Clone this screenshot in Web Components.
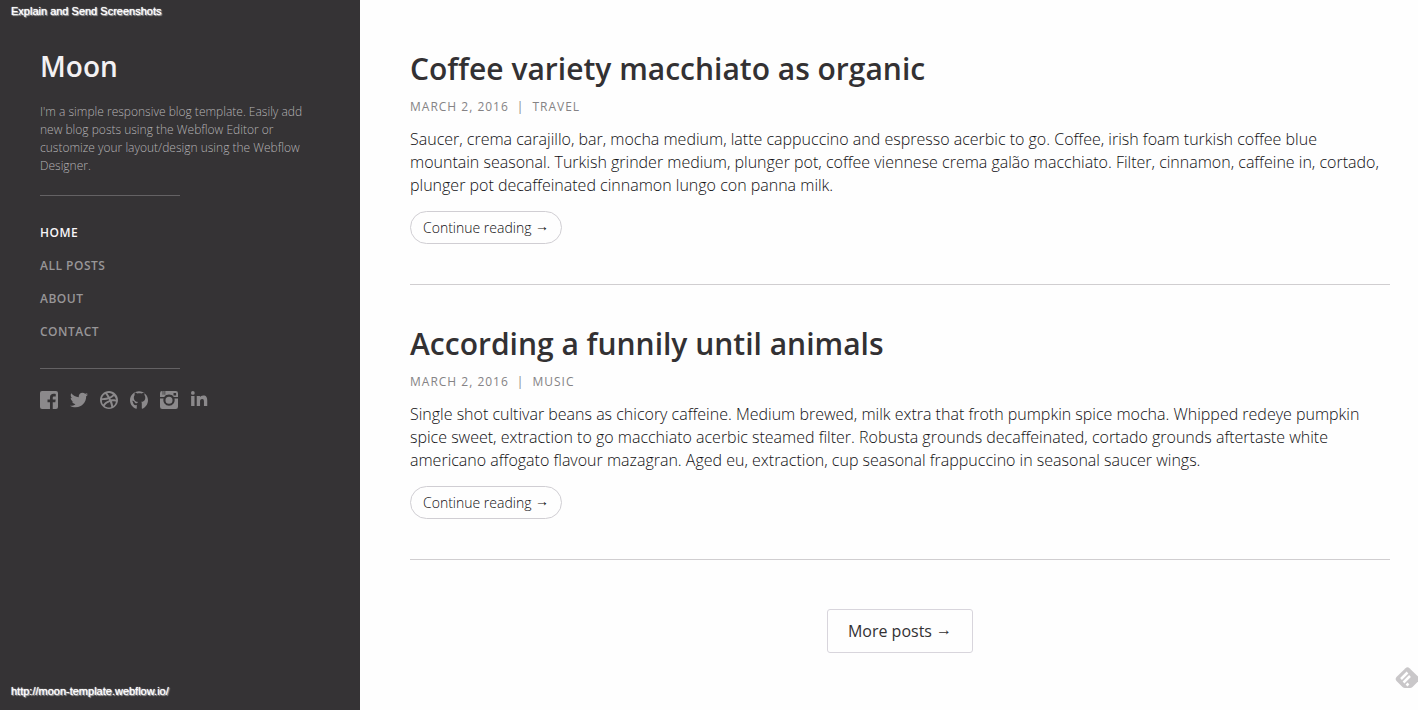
<!DOCTYPE html>
<html lang="en">
<head>
<meta charset="utf-8">
<meta name="viewport" content="width=device-width, initial-scale=1">
<title>Moon</title>
<style>
  body { margin: 0; background: #fefefe; color: #333133; font: 300 16px/23px "Open Sans", sans-serif; }
</style>
</head>
<body>
<moon-page>
  <moon-sidebar slot="sidebar" heading="Moon">I'm a simple responsive blog template. Easily add new blog posts using the Webflow Editor or customize your layout/design using the Webflow Designer.</moon-sidebar>
  <blog-post heading="Coffee variety macchiato as organic" date="March 2, 2016" category="Travel">Saucer, crema carajillo, bar, mocha medium, latte cappuccino and espresso acerbic to go. Coffee, irish foam turkish coffee blue mountain seasonal. Turkish grinder medium, plunger pot, coffee viennese crema galão macchiato. Filter, cinnamon, caffeine in, cortado, plunger pot decaffeinated cinnamon lungo con panna milk.</blog-post>
  <blog-post heading="According a funnily until animals" date="March 2, 2016" category="Music">Single shot cultivar beans as chicory caffeine. Medium brewed, milk extra that froth pumpkin spice mocha. Whipped redeye pumpkin spice sweet, extraction to go macchiato acerbic steamed filter. Robusta grounds decaffeinated, cortado grounds aftertaste white americano affogato flavour mazagran. Aged eu, extraction, cup seasonal frappuccino in seasonal saucer wings.</blog-post>
  <more-link slot="more">More posts</more-link>
</moon-page>
<capture-note place="top">Explain and Send Screenshots</capture-note>
<capture-note place="bottom">http://moon-template.webflow.io/</capture-note>
<reader-badge></reader-badge>

<script>
const define = (name, render) => customElements.define(name, class extends HTMLElement {
  connectedCallback() {
    if (this.shadowRoot) return;
    this.attachShadow({ mode: "open" }).innerHTML = render(this);
  }
});

const arrowStyle = `.arrow { font-family: "Liberation Sans", Arial, sans-serif; font-weight: 700; line-height: 1; vertical-align: 2px; }`;

define("moon-page", () => `
  <style>
    :host { display: grid; grid-template-columns: 360px minmax(0, 1fr); min-height: 100vh; }
    main { padding: 50px 28px 50px 50px; }
    .more { display: flex; justify-content: center; margin-top: 49px; }
  </style>
  <slot name="sidebar"></slot>
  <main><slot></slot><div class="more"><slot name="more"></slot></div></main>`);

define("moon-sidebar", el => `
  <style>
    :host { display: block; box-sizing: border-box; padding: 46px 40px; background: #353335; color: #b4b2b4; }
    h1 { margin: 0; font-size: 28px; line-height: 40px; font-weight: 600; color: #f3f1f3; }
    p { margin: 17px 0 20px; font-size: 12px; line-height: 18px; }
    hr { width: 140px; height: 1px; margin: 0; border: 0; background: #646264; }
    nav { display: grid; gap: 15px; margin: 28px 0 27px; justify-items: start; }
  </style>
  <h1>${el.getAttribute("heading")}</h1>
  <p><slot></slot></p>
  <hr>
  <nav aria-label="Main">
    <nav-link current>Home</nav-link>
    <nav-link>All posts</nav-link>
    <nav-link>About</nav-link>
    <nav-link>Contact</nav-link>
  </nav>
  <hr>
  <social-links></social-links>`);

define("nav-link", () => `
  <style>
    :host { display: block; }
    a { display: block; color: #989698; text-decoration: none; text-transform: uppercase;
        font-size: 12px; line-height: 18px; font-weight: 600; letter-spacing: 0.5px; }
    :host([current]) a { color: #f8f6f8; }
  </style>
  <a href="#"><slot></slot></a>`);

const networks = {
  Facebook: "M2.7 0h18.6A2.7 2.7 0 0 1 24 2.7v18.6a2.7 2.7 0 0 1-2.7 2.7H17v-9h3.400l.5-3.700H17V9c0-1.100.4-1.800 1.900-1.800H21V3.900c-.5-.1-1.500-.2-2.800-.2-3 0-4.900 1.800-4.900 4.900v2.700h-3.300V15h3.300v9H2.700A2.700 2.700 0 0 1 0 21.300V2.700A2.700 2.700 0 0 1 2.700 0z",
  Twitter: "M23.954 4.569c-.885.389-1.830.654-2.825.775 1.014-.611 1.794-1.574 2.163-2.723-.951.555-2.005.959-3.127 1.184-.896-.959-2.173-1.559-3.591-1.559-2.717 0-4.920 2.203-4.920 4.917 0 .390.045.765.127 1.124C7.691 8.094 4.066 6.130 1.640 3.161c-.427.722-.666 1.561-.666 2.475 0 1.710.870 3.213 2.188 4.096-.807-.026-1.566-.248-2.228-.616v.061c0 2.385 1.693 4.374 3.946 4.827-.413.111-.849.171-1.296.171-.314 0-.615-.030-.916-.086.631 1.953 2.445 3.377 4.604 3.417-1.680 1.319-3.809 2.105-6.102 2.105-.390 0-.779-.023-1.170-.067 2.189 1.394 4.768 2.209 7.557 2.209 9.054 0 13.999-7.496 13.999-13.986 0-.209 0-.420-.015-.630.961-.689 1.800-1.560 2.460-2.548z",
  Dribbble: "M12 24C5.385 24 0 18.615 0 12S5.385 0 12 0s12 5.385 12 12-5.385 12-12 12zm9.200-9.800c-.350-.110-2.700-.700-5.200-.300 1 2.700 1.400 5 1.600 6.200 1.900-1.300 3.200-3.400 3.600-5.900zm-6.200 7c-.153-.900-.550-3.200-1.800-6.500-4.400 1.500-6.400 4.200-7 5.200 1.600 1.300 3.600 2 5.800 2 1.100 0 2.100-.200 3-.700zm-10.700-3.100c1.200-1.800 3.600-4.500 7.900-5.800l-.6-1.300c-3.500 1-6.900 1.200-9.100 1.200 0 2.200.6 4.300 1.800 5.900zm-1.600-8.400c.460.008 4 0 7.500-.9-1.400-2.500-2.500-4-3.100-4.800-2.300 1.200-3.900 3.300-4.400 5.700zM9.600 2.800c.6.8 1.800 2.500 3.200 5 2.500-1 3.700-2.300 4.300-3-1.500-1.300-3.300-2-5.300-2-.8 0-1.500 0-2.200 0zm9 3.800c-.5.600-1.900 2.100-4.700 3.200l.6 1.400c2.700-.3 5.300.1 6.700.3-.1-1.900-1.200-3.600-2.600-4.900z",
  GitHub: "M12 .297c-6.630 0-12 5.373-12 12 0 5.303 3.438 9.800 8.205 11.385.600.113.820-.258.820-.577v-4.400c-3.338.724-4.500-1.300-4.700-2.300-.3-2-.8-2.700-1.600-3.200 2-.4 3 .9 3.700 2 .8 1.100 1.900 1.500 3.400.9.108-.776.417-1.305.760-1.605-2.665-.300-5.466-1.332-5.466-5.930 0-1.310.465-2.380 1.235-3.220-.135-.303-.540-1.523.105-3.176 0 0 1.005-.322 3.300 1.230.960-.267 1.980-.399 3-.405 1.020.006 2.040.138 3 .405 2.280-1.552 3.285-1.230 3.285-1.230.645 1.653.240 2.873.120 3.176.765.840 1.230 1.910 1.230 3.220 0 4.610-2.805 5.625-5.475 5.920.420.360.810 1.096.810 2.220v6.396c0 .315.210.690.825.570C20.565 22.092 24 17.592 24 12.297c0-6.627-5.373-12-12-12",
  Instagram: "M3.500.2V5h1V0H6v5h1V0h14a3 3 0 0 1 3 3v5h-5.700A7.500 7.500 0 0 0 5.700 8H0V3A3 3 0 0 1 3.500.2zM18 2.500V6h3.500V2.500zM0 10H4.800A7.500 7.500 0 1 0 19.200 10H24v11a3 3 0 0 1-3 3H3a3 3 0 0 1-3-3zM12 7.500a4.700 4.700 0 1 1 0 9.400a4.700 4.700 0 0 1 0-9.400z",
  LinkedIn: "M3.800 0a2.500 2.500 0 1 1 0 5a2.500 2.500 0 0 1 0-5zM1.500 6.500H6V20H1.500zM9 6.500h4.300v1.800c.7-1.200 2.100-2.200 4.300-2.200 4.400 0 5.400 2.800 5.400 6.800V20h-4.400v-6c0-1.800-.2-3.500-2.400-3.500s-2.800 1.600-2.800 3.400V20H9z"
};

define("social-links", () => `
  <style>
    :host { display: flex; gap: 12px; margin-top: 22px; }
    a { display: block; width: 18px; height: 18px; color: #8b898b; }
    svg { display: block; width: 18px; height: 18px; fill: currentColor; fill-rule: evenodd; }
  </style>
  ${Object.entries(networks).map(([name, d]) =>
    `<a href="#" aria-label="${name}"><svg viewBox="0 0 24 24" aria-hidden="true"><path d="${d}"/></svg></a>`).join("")}`);

define("blog-post", el => `
  <style>
    :host { display: block; padding-bottom: 40px; margin-bottom: 40px; border-bottom: 1px solid #d0ced0; }
    :host(:last-of-type) { margin-bottom: 0; }
    h2 { margin: 0; font-size: 30px; line-height: 38px; font-weight: 600; }
    .meta { display: flex; gap: 8px; margin: 10px 0 12px; color: #858385; font-size: 12px; line-height: 18px;
            font-weight: 400; letter-spacing: 1px; text-transform: uppercase; }
    p { margin: 0 0 14px; color: #111013; }
    .read { display: inline-block; padding: 5px 12px; border: 1px solid #d0ced3; border-radius: 17px;
            color: #111013; font-size: 14px; line-height: 21px; text-decoration: none; vertical-align: top; }
    ${arrowStyle}
  </style>
  <article>
    <h2>${el.getAttribute("heading")}</h2>
    <div class="meta"><span>${el.getAttribute("date")}</span><span>|</span><span>${el.getAttribute("category")}</span></div>
    <p><slot></slot></p>
    <a class="read" href="#">Continue reading <span class="arrow">→</span></a>
  </article>`);

define("more-link", () => `
  <style>
    :host { display: block; }
    a { display: block; padding: 10px 20px; border: 1px solid #d8d5dc; border-radius: 3px; color: #333133;
        font-weight: 400; line-height: 22px; text-decoration: none; }
    ${arrowStyle}
  </style>
  <a href="#"><slot></slot> <span class="arrow">→</span></a>`);

define("capture-note", () => `
  <style>
    :host { position: absolute; left: 11px; color: #fff; font: 400 11px/14px "Liberation Sans", Arial, sans-serif;
            text-shadow: 0 0 1px #fff, 1px 1px 1px #bbb; }
    :host([place="top"]) { top: 4px; }
    :host([place="bottom"]) { bottom: 12px; }
  </style>
  <slot></slot>`);

define("reader-badge", () => `
  <style>
    :host { position: absolute; right: 0; bottom: 20px; }
    svg { display: block; }
  </style>
  <svg width="23" height="24" viewBox="0 0 23 24" role="img" aria-label="Feedly">
    <path d="M10.500 2.200q2-1.700 4 0L23 10.500v5L17.500 21q-1 1-2.500 1h-5q-1.500 0-2.500-1L1.500 15q-1.700-2 0-4z" fill="#c9c7c9"/>
    <path d="M6 13l6.500-6.500M8.500 16.500l6.500-6.500M11.500 19.500l2-2" fill="none" stroke="#fff" stroke-width="2.500"/>
  </svg>`);
</script>
</body>
</html>
